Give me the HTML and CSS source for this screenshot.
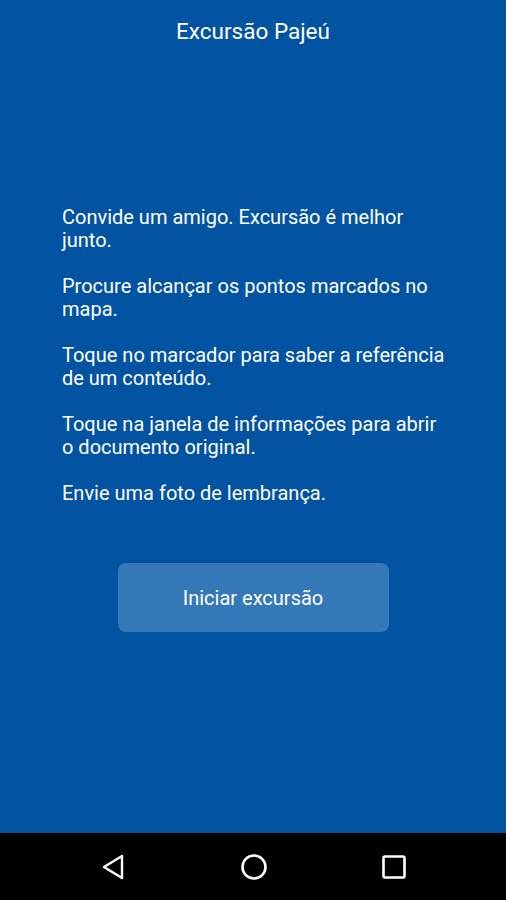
FILE: index.html
```html
<!DOCTYPE html>
<html>
<head>
    <meta charset="utf-8">
    <link rel="stylesheet" href="styles.css">
</head>
<body>
    <div class="screen">
        <div class="titlebar">Excursão Pajeú</div>

        <div class="content">
            <div class="tips">
                <p>Convide um amigo. Excursão é melhor junto.</p>
                <p>Procure alcançar os pontos marcados no mapa.</p>
                <p>Toque no marcador para saber a referência de um conteúdo.</p>
                <p>Toque na janela de informações para abrir o documento original.</p>
                <p>Envie uma foto de lembrança.</p>
            </div>

            <div class="actions">
                <button class="start">Iniciar excursão</button>
            </div>
        </div>
    </div>

    <div class="navbar">
        <svg class="nav-icon" width="28" height="28" viewBox="0 0 28 28">
            <path d="M22 3 L4 14 L22 25 Z" fill="none" stroke="#fff" stroke-width="2.4" stroke-linejoin="round"/>
        </svg>
        <svg class="nav-icon" width="28" height="28" viewBox="0 0 28 28">
            <circle cx="14" cy="14" r="11.5" fill="none" stroke="#fff" stroke-width="2.6"/>
        </svg>
        <svg class="nav-icon" width="28" height="28" viewBox="0 0 28 28">
            <rect x="3.5" y="3.5" width="21" height="21" rx="1.5" fill="none" stroke="#fff" stroke-width="2.6"/>
        </svg>
    </div>
</body>
</html>
```

FILE: styles.css
```css
html,
body {
    margin: 0;
    height: 100%;
    font-family: Roboto, "Noto Sans", sans-serif;
    color: #fff;
    background-color: #000;
}

.screen {
    height: 833px;
    background-color: #0353a3;
    display: flex;
    flex-direction: column;
}

.titlebar {
    height: 62px;
    line-height: 62px;
    text-align: center;
    font-size: 22.5px;
}

.content {
    padding: 144px 57px 0 62px;
}

.tips p {
    margin: 0 0 23px 0;
    font-size: 20px;
    line-height: 23px;
}

.actions {
    display: flex;
    justify-content: center;
    padding: 35px 5px 0 0;
}

.start {
    width: 271px;
    height: 69px;
    border: none;
    border-radius: 8px;
    background-color: #3578b8;
    color: #fff;
    font-family: Roboto, "Noto Sans", sans-serif;
    font-size: 20px;
}

.navbar {
    height: 67px;
    display: flex;
    justify-content: space-between;
    align-items: center;
    padding: 0 98px 0 100px;
}
```
